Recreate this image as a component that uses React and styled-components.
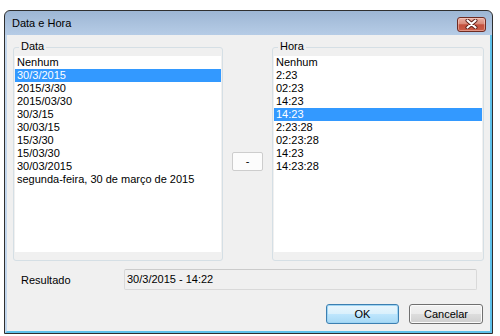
import React, { useState } from 'react';
import styled, { createGlobalStyle } from 'styled-components';

// ─── Global ───
const GlobalStyle = createGlobalStyle`
  html, body {
    margin: 0;
    padding: 0;
    background: #ffffff;
  }
  body {
    font-family: "Liberation Sans", Arial, sans-serif;
    font-size: 11px;
    color: #000;
  }
`;

// ─── Window chrome ───
const Window = styled.div`
  box-sizing: border-box;
  margin: 10px 0 0 4px;
  width: 489px;
  height: 324px;
  border: 1px solid #2f2f2f;
  border-radius: 6px 6px 0 0;
  background: linear-gradient(#9db6d4 0px, #b6cce6 24px, #c2d6ec 100%);
  display: flex;
  flex-direction: column;
  overflow: hidden;
`;

const TitleBar = styled.div`
  height: 24px;
  flex: none;
  display: flex;
  align-items: center;
  justify-content: space-between;
  padding: 0 6px 0 7px;
`;

const Title = styled.span`
  font-size: 11px;
  color: #000;
  line-height: 13px;
  margin-top: 1px;
`;

const CloseButton = styled.button`
  box-sizing: border-box;
  width: 29px;
  height: 15px;
  margin-top: 2px;
  padding: 0;
  border: 1px solid #6e2b22;
  border-radius: 3px;
  background: linear-gradient(#eab0a3 0%, #d98a79 45%, #c4503d 52%, #c95d48 100%);
  box-shadow: inset 0 0 0 1px rgba(255, 220, 210, 0.45);
  display: flex;
  align-items: center;
  justify-content: center;
`;

const Frame = styled.div`
  flex: 1;
  display: flex;
  border-left: 2px solid #c3d7ed;
  border-right: 2px solid #5fc1ea;
  border-bottom: 2px solid #5fc1ea;
`;

const Body = styled.div`
  flex: 1;
  background: #f0f0f0;
  padding: 12px 0 0 6px;
  display: flex;
  flex-direction: column;
`;

// ─── Lists ───
const Columns = styled.div`
  display: grid;
  grid-template-columns: 210px 49px 212px;
  height: 214px;
`;

const Group = styled.div`
  position: relative;
  box-sizing: border-box;
  border: 1px solid #d5dfe5;
  border-radius: 3px;
  padding: 8px 1px 8px 1px;
  display: flex;
`;

const Legend = styled.span`
  position: absolute;
  top: -8px;
  left: 5px;
  padding: 0 2px;
  background: #f0f0f0;
  line-height: 13px;
`;

const ListBox = styled.ul`
  flex: 1;
  margin: 0;
  padding: 0;
  list-style: none;
  background: #fff;
`;

const Item = styled.li`
  height: 13px;
  line-height: 13px;
  padding-left: 2px;
  white-space: nowrap;
  background: ${p => (p.$selected ? '#3399ff' : 'transparent')};
  color: ${p => (p.$selected ? '#fff' : '#000')};
  cursor: default;
`;

const Middle = styled.div`
  display: flex;
  align-items: center;
  justify-content: center;
  padding-top: 15px;
`;

const SmallButton = styled.button`
  box-sizing: border-box;
  width: 31px;
  height: 19px;
  padding: 0;
  border: 1px solid #cdcdcd;
  border-radius: 2px;
  background: #fcfcfc;
  font: inherit;
  font-size: 11px;
  line-height: 11px;
`;

// ─── Result row ───
const ResultRow = styled.div`
  display: flex;
  align-items: center;
  margin-top: 8px;
  padding-left: 8px;
  height: 21px;
`;

const Label = styled.span`
  width: 103px;
`;

const ResultField = styled.div`
  box-sizing: border-box;
  width: 353px;
  height: 21px;
  border: 1px solid #d9d9d9;
  border-top-color: #cbcbcb;
  border-radius: 2px;
  padding: 0 2px;
  line-height: 19px;
  background: #f0f0f0;
`;

// ─── Buttons ───
const ButtonRow = styled.div`
  display: flex;
  justify-content: flex-end;
  gap: 10px;
  margin-top: 14px;
  padding-right: 7px;
`;

const DialogButton = styled.button`
  box-sizing: border-box;
  width: ${p => p.$width}px;
  height: 20px;
  padding: 0;
  border: 1px solid ${p => (p.$default ? '#3c7fb1' : '#707070')};
  border-radius: 3px;
  font: inherit;
  font-size: 11px;
  color: #000;
  background: ${p =>
    p.$default
      ? 'linear-gradient(#eaf6fd 0%, #d9f0fc 50%, #bee6fd 51%, #a7d9f5 100%)'
      : 'linear-gradient(#f2f2f2 0%, #ebebeb 50%, #dddddd 51%, #cfcfcf 100%)'};
  box-shadow: inset 0 0 0 1px ${p => (p.$default ? '#9fd5f4' : '#fbfbfb')};
`;

const dates = [
  'Nenhum',
  '30/3/2015',
  '2015/3/30',
  '2015/03/30',
  '30/3/15',
  '30/03/15',
  '15/3/30',
  '15/03/30',
  '30/03/2015',
  'segunda-feira, 30 de março de 2015',
];

const times = ['Nenhum', '2:23', '02:23', '14:23', '14:23', '2:23:28', '02:23:28', '14:23', '14:23:28'];

const CloseIcon = () => (
  <svg width="13" height="10" viewBox="0 0 13 10">
    <path d="M2.5 1.5 L10.5 8.5 M10.5 1.5 L2.5 8.5" stroke="#5a1d16" strokeWidth="4" strokeLinecap="round" />
    <path d="M2.5 1.5 L10.5 8.5 M10.5 1.5 L2.5 8.5" stroke="#ffffff" strokeWidth="2.2" strokeLinecap="round" />
  </svg>
);

export default function App() {
  const [date, setDate] = useState(1);
  const [time, setTime] = useState(4);

  return (
    <>
      <GlobalStyle />
      <Window>
        <TitleBar>
          <Title>Data e Hora</Title>
          <CloseButton aria-label="Fechar">
            <CloseIcon />
          </CloseButton>
        </TitleBar>
        <Frame>
          <Body>
            <Columns>
              <Group>
                <Legend>Data</Legend>
                <ListBox>
                  {dates.map((d, i) => (
                    <Item key={i} $selected={i === date} onClick={() => setDate(i)}>
                      {d}
                    </Item>
                  ))}
                </ListBox>
              </Group>
              <Middle>
                <SmallButton>-</SmallButton>
              </Middle>
              <Group>
                <Legend>Hora</Legend>
                <ListBox>
                  {times.map((t, i) => (
                    <Item key={i} $selected={i === time} onClick={() => setTime(i)}>
                      {t}
                    </Item>
                  ))}
                </ListBox>
              </Group>
            </Columns>
            <ResultRow>
              <Label>Resultado</Label>
              <ResultField>30/3/2015 - 14:22</ResultField>
            </ResultRow>
            <ButtonRow>
              <DialogButton $default $width={73}>OK</DialogButton>
              <DialogButton $width={74}>Cancelar</DialogButton>
            </ButtonRow>
          </Body>
        </Frame>
      </Window>
    </>
  );
}
